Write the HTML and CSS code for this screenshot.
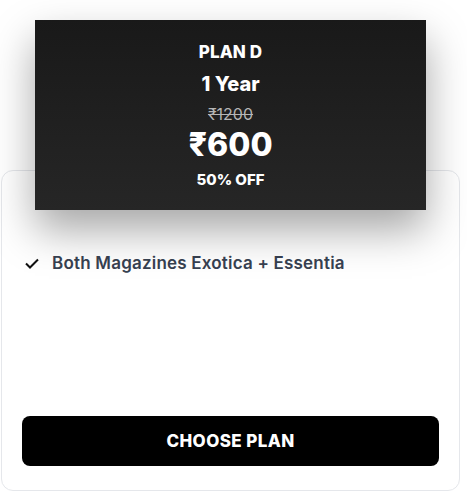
FILE: index.html
```html
<!DOCTYPE html>
<html>
<head>
<meta charset="utf-8">
<link rel="stylesheet" href="styles.css">
</head>
<body>
<div class="plan">
  <div class="plan-head">
    <div class="plan-name">PLAN D</div>
    <div class="plan-term">1 Year</div>
    <div class="plan-old">₹1200</div>
    <div class="plan-price">₹600</div>
    <div class="plan-off">50% OFF</div>
  </div>
  <div class="plan-card">
    <ul class="features">
      <li class="feature">
        <svg class="check" viewBox="0 0 14 11" width="14" height="11"><path d="M1 5.5 L5 9.5 L13 1.5" fill="none" stroke="#111" stroke-width="2"/></svg>
        <span>Both Magazines Exotica + Essentia</span>
      </li>
    </ul>
    <button class="choose">CHOOSE PLAN</button>
  </div>
</div>
</body>
</html>
```
FILE: styles.css
```css
* { box-sizing: border-box; }
html, body { margin: 0; background: #fff; }
body { font-family: Inter, "Liberation Sans", sans-serif; }
.plan { width: 459px; margin-left: 1px; padding-top: 20px; }
.plan-head {
  position: relative;
  z-index: 1;
  margin: 0 34px;
  height: 190px;
  background: linear-gradient(180deg, #191919 0%, #262626 100%);
  color: #fff;
  display: flex;
  flex-direction: column;
  align-items: center;
  padding-top: 22px;
  box-shadow: 0 20px 40px rgba(0,0,0,0.35);
  font-weight: 800;
}
.plan-name { font-size: 17px; line-height: 20px; letter-spacing: 0.1px; }
.plan-term { font-size: 20px; line-height: 24px; margin-top: 10px; }
.plan-old { font-size: 16px; line-height: 20px; margin-top: 8px; color: #b5b5b5; font-weight: 400; text-decoration: line-through; }
.plan-price { font-size: 32px; line-height: 36px; margin-top: 3px; }
.plan-off { font-size: 15px; line-height: 20px; margin-top: 7px; }
.plan-card {
  margin-top: -40px;
  height: 321px;
  border: 1px solid #e5e7eb;
  border-radius: 12px;
  background: #fff;
  padding: 80px 20px 24px;
  display: flex;
  flex-direction: column;
}
.features { list-style: none; margin: 0; padding: 0; flex: 1; }
.feature { display: flex; align-items: center; gap: 13px; padding-left: 3px; font-size: 17px; line-height: 24px; font-weight: 600; letter-spacing: 0.2px; color: #374151; }
.check { flex: none; }
.choose {
  height: 50px;
  width: 100%;
  border: 0;
  border-radius: 8px;
  background: #000;
  color: #fff;
  font-family: inherit;
  font-size: 17px;
  letter-spacing: 0.4px;
  font-weight: 800;
}
```
